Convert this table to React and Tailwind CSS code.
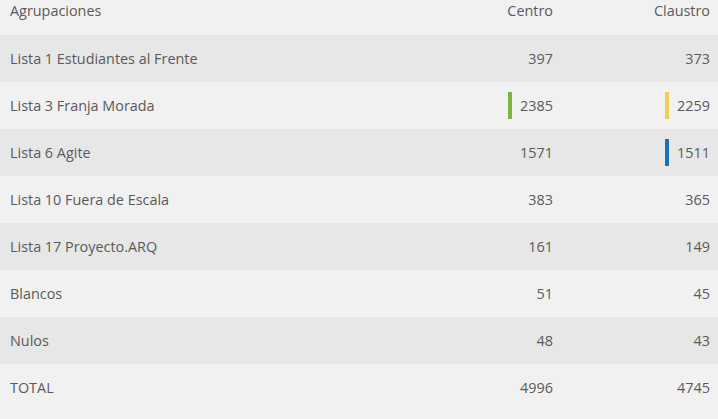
import React from "react";

const rows = [
  { name: "Lista 1 Estudiantes al Frente", centro: 397, claustro: 373 },
  { name: "Lista 3 Franja Morada", centro: 2385, claustro: 2259, centroBar: "bg-[#7cb342]", claustroBar: "bg-[#efd054]" },
  { name: "Lista 6 Agite", centro: 1571, claustro: 1511, claustroBar: "bg-[#1d6fb8]" },
  { name: "Lista 10 Fuera de Escala", centro: 383, claustro: 365 },
  { name: "Lista 17 Proyecto.ARQ", centro: 161, claustro: 149 },
  { name: "Blancos", centro: 51, claustro: 45 },
  { name: "Nulos", centro: 48, claustro: 43 },
  { name: "TOTAL", centro: 4996, claustro: 4745 },
];

const Cell = ({ value, bar }) => (
  <div className="flex items-center justify-end gap-2">
    {bar && <span className={`block w-[4px] h-[27px] ${bar}`} />}
    <span>{value}</span>
  </div>
);

const App = () => {
  return (
    <div
      className="w-[718px] h-[419px] overflow-hidden bg-[#f1f1f1] text-[#5a5a5a] text-[14.4px]"
      style={{ fontFamily: '"Open Sans", sans-serif' }}
    >
      <div className="grid grid-cols-[1fr_120px_157px] h-[35px] items-start pl-[10px] pr-[8px]">
        <div>Agrupaciones</div>
        <div className="text-right">Centro</div>
        <div className="text-right">Claustro</div>
      </div>
      {rows.map((r, i) => (
        <div
          key={r.name}
          className={`grid grid-cols-[1fr_120px_157px] h-[47px] items-center pl-[10px] pr-[8px] ${
            i % 2 === 0 ? "bg-[#e7e7e7]" : "bg-[#f1f1f1]"
          }`}
        >
          <div>{r.name}</div>
          <Cell value={r.centro} bar={r.centroBar} />
          <Cell value={r.claustro} bar={r.claustroBar} />
        </div>
      ))}
    </div>
  );
};

export default App;
